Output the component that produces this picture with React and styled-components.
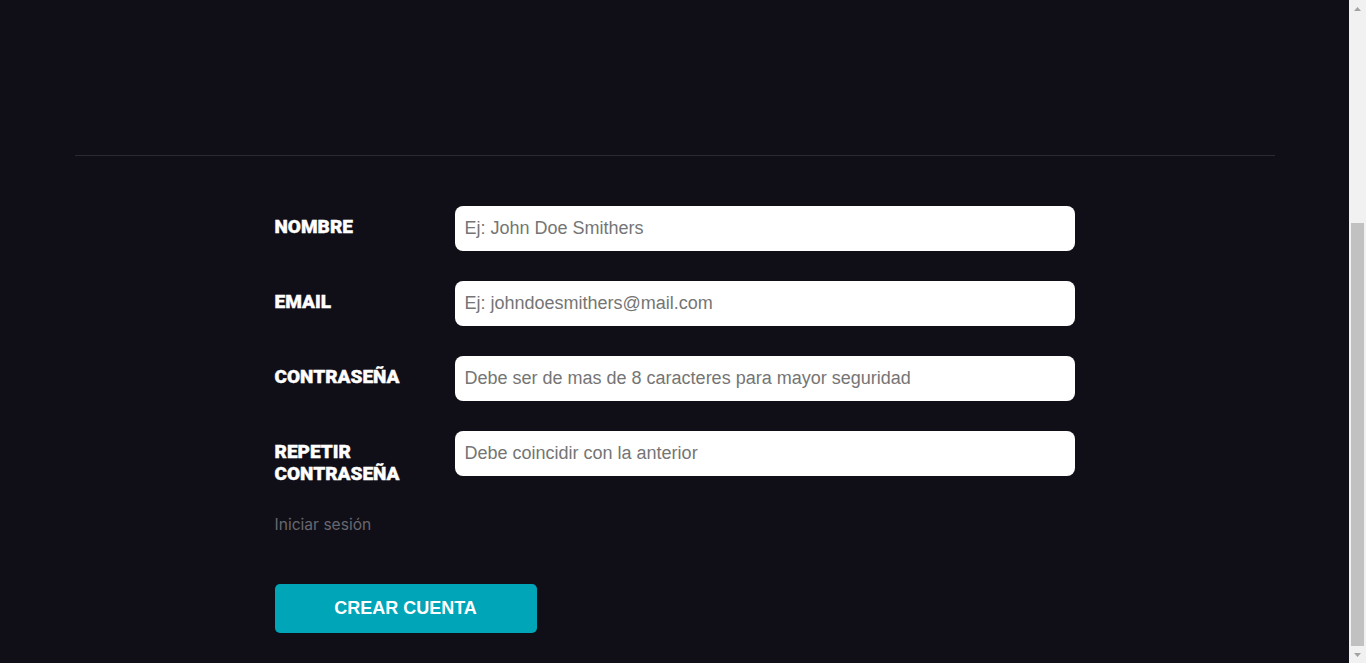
import React, { useLayoutEffect } from "react";
import styled, { createGlobalStyle } from "styled-components";

const Global = createGlobalStyle`
  html, body { margin: 0; padding: 0; background: #100f18; }
  body { font-family: "Liberation Sans", Arial, sans-serif; }
  * { box-sizing: border-box; }
`;

const Page = styled.div`
  min-height: 986px;
  padding-right: 17px;
  background: #100f18;
  display: flex;
  flex-direction: column;
`;

const Header = styled.header`
  height: 478px;
`;

const Container = styled.div`
  width: 1200px;
  margin: 0 auto;
  border-top: 1px solid #2b2a31;
  padding: 50px 0 30px;
`;

const Form = styled.form`
  width: 800px;
  margin: 0 auto;
  display: flex;
  flex-direction: column;
`;

const Fields = styled.div`
  display: flex;
  flex-direction: column;
  gap: 30px;
`;

const Row = styled.div`
  display: grid;
  grid-template-columns: 180px 620px;
  align-items: start;
`;

const Label = styled.label`
  font-family: Roboto, "Liberation Sans", sans-serif;
  font-weight: 900;
  font-size: 19px;
  line-height: 22px;
  color: #ffffff;
  padding-top: 10px;
  -webkit-text-stroke: 0.4px #ffffff;
`;

const Input = styled.input`
  height: 45px;
  width: 100%;
  border: none;
  border-radius: 8px;
  background: #ffffff;
  padding: 0 10px;
  font-family: "Liberation Sans", Arial, sans-serif;
  font-size: 18px;
  color: #222;
  outline: none;
  &::placeholder { color: #757575; }
`;

const LoginLink = styled.a`
  margin-top: 28px;
  font-family: Inter, sans-serif;
  font-size: 15.6px;
  line-height: 24px;
  color: #68676e;
  text-decoration: none;
  align-self: flex-start;
`;

const Button = styled.button`
  margin-top: 47px;
  width: 262px;
  height: 49px;
  border: none;
  border-radius: 5px;
  background: #00a5b8;
  color: #ffffff;
  font-family: "Liberation Sans", Arial, sans-serif;
  font-weight: 700;
  font-size: 18px;
  align-self: flex-start;
  cursor: pointer;
`;

/* Imitation of the browser's vertical scrollbar (lies over the page edge) */
const ScrollBar = styled.div`
  position: fixed;
  top: 0;
  right: 0;
  width: 17px;
  height: 100vh;
  background: #f1f1f1;
  display: flex;
  flex-direction: column;
  z-index: 10;
`;

const ArrowBtn = styled.div`
  height: 17px;
  flex: none;
  display: flex;
  align-items: center;
  justify-content: center;
`;

const Track = styled.div`
  flex: 1;
  display: flex;
  flex-direction: column;
  justify-content: flex-end;
  padding: 0 2px;
`;

const Thumb = styled.div`
  height: 423px;
  background: #c1c1c1;
`;

const Arrow = ({ down }) => (
  <svg width="7" height="4" viewBox="0 0 7 4">
    <polygon points={down ? "0,0 7,0 3.5,4" : "0,4 7,4 3.5,0"} fill="#a3a3a3" />
  </svg>
);

const fields = [
  { id: "nombre", label: "NOMBRE", ph: "Ej: John Doe Smithers", type: "text" },
  { id: "email", label: "EMAIL", ph: "Ej: johndoesmithers@mail.com", type: "email" },
  { id: "pass", label: "CONTRASEÑA", ph: "Debe ser de mas de 8 caracteres para mayor seguridad", type: "password" },
  { id: "pass2", label: "REPETIR CONTRASEÑA", ph: "Debe coincidir con la anterior", type: "password" },
];

export default function App() {
  useLayoutEffect(() => {
    window.scrollTo(0, document.documentElement.scrollHeight);
  }, []);
  return (
    <>
      <Global />
      <Page>
        <Header />
        <Container>
          <Form onSubmit={(e) => e.preventDefault()}>
            <Fields>
              {fields.map((f) => (
                <Row key={f.id}>
                  <Label htmlFor={f.id}>{f.label}</Label>
                  <Input id={f.id} type={f.type} placeholder={f.ph} />
                </Row>
              ))}
            </Fields>
            <LoginLink href="#">Iniciar sesión</LoginLink>
            <Button type="submit">CREAR CUENTA</Button>
          </Form>
        </Container>
      </Page>
      <ScrollBar aria-hidden="true">
        <ArrowBtn><Arrow /></ArrowBtn>
        <Track><Thumb /></Track>
        <ArrowBtn><Arrow down /></ArrowBtn>
      </ScrollBar>
    </>
  );
}
